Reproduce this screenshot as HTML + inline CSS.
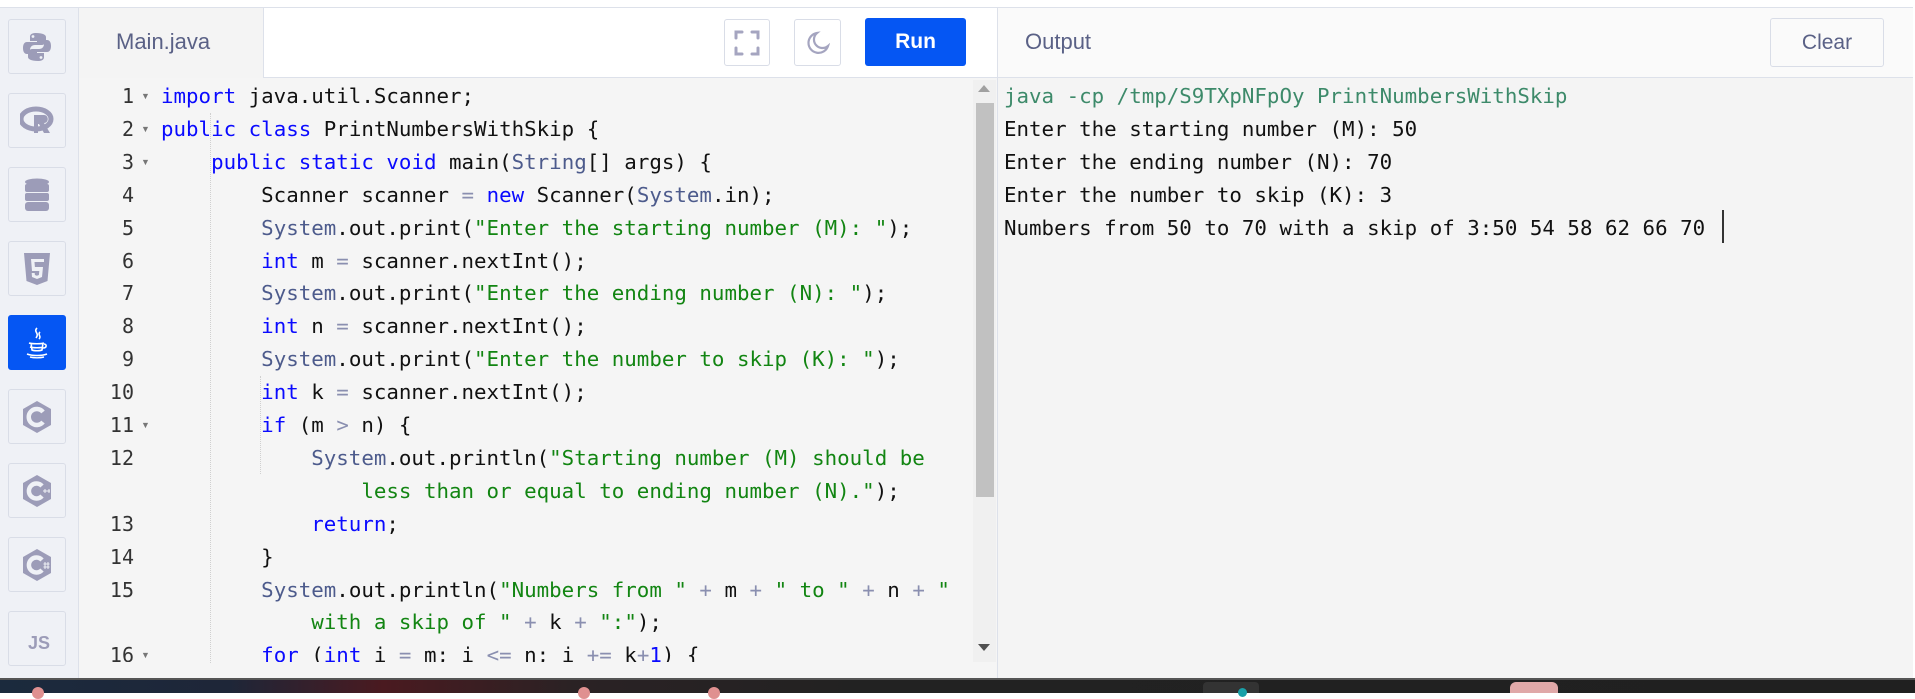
<!DOCTYPE html>
<html><head><meta charset="utf-8">
<style>
*{margin:0;padding:0;box-sizing:border-box}
html,body{width:1915px;height:693px;overflow:hidden;background:#fff;font-family:"Liberation Sans",sans-serif}
.abs{position:absolute}
#side{left:0;top:7px;width:79px;height:672px;background:#eff1f6;border-right:1px solid #dde1ea;border-top:1px solid #dde1ea}
.ib{position:absolute;left:8px;width:58px;height:55px;border:1px solid #d9dde7;border-radius:3px;display:flex;align-items:center;justify-content:center}
.ib.act{background:#0556f3;border-color:#0556f3}
#tab{left:79px;top:7px;width:184px;height:71px;background:#f4f4f4;border-top:1px solid #dde1ea}
#tab span{position:absolute;left:37px;top:21px;font-size:22px;color:#5a6186}
#hdr{left:263px;top:7px;width:734px;height:71px;background:#fff;border-left:1px solid #dde1ea;border-bottom:1px solid #dde1ea;border-top:1px solid #dde1ea}
.btn{position:absolute;top:19px;height:47px;border:1px solid #d9dde7;border-radius:3px;background:#fff;display:flex;align-items:center;justify-content:center}
#run{left:865px;top:18px;width:101px;height:48px;background:#0556f3;border-radius:3px;color:#fff;font-weight:bold;font-size:21px;display:flex;align-items:center;justify-content:center}
#ed{left:79px;top:78px;width:918px;height:601px;background:#f5f5f5}
#code{left:79px;top:80px;width:894px;height:582px;overflow:hidden}
.ln{position:absolute;height:32.9px;line-height:32.9px;font-family:"DejaVu Sans Mono",monospace;font-size:20.8px;white-space:pre;color:#111}
.num{position:absolute;left:0;width:55px;text-align:right;height:32.9px;line-height:32.9px;font-family:"DejaVu Sans Mono",monospace;font-size:20px;color:#333}
.fold{position:absolute;left:62px;font-size:9px;color:#777;line-height:32.9px}
.k{color:#0a0aff}.s{color:#128512}.c{color:#4d5b8c}.o{color:#8a8fb0}
.guide{position:absolute;width:0;border-left:1px dotted #d0d0d0}
#sb{left:973px;top:80px;width:23px;height:582px;background:#f0f0f0}
#thumb{left:976px;top:103px;width:18px;height:394px;background:#c1c1c1}
#ohdr{left:997px;top:7px;width:916px;height:71px;background:#fafafa;border-left:1px solid #dde1ea;border-bottom:1px solid #dde1ea;border-top:1px solid #dde1ea}
#ohdr span{position:absolute;left:27px;top:21px;font-size:22px;color:#5a6186}
#clear{position:absolute;left:772px;top:10px;width:114px;height:49px;border:1px solid #d9dde7;border-radius:3px;background:#fafafa;font-size:21px;color:#5a6186;display:flex;align-items:center;justify-content:center}
#out{left:997px;top:78px;width:916px;height:601px;background:#f4f4f4;border-left:1px solid #dde1ea}
.ol{position:absolute;left:6px;height:32.9px;line-height:32.9px;font-family:"DejaVu Sans Mono",monospace;font-size:20.8px;white-space:pre;color:#111}
#task{left:0;top:678px;width:1915px;height:15px;background:linear-gradient(90deg,#1b2a3d 0%,#1e2638 12%,#4a1a20 20%,#2a2224 30%,#222 45%,#202020 100%);border-top:2px solid #555}
.dot{position:absolute;top:687px;width:12px;height:12px;border-radius:50%;background:#e09090}
</style></head><body>
<div class="abs" style="left:0;top:0;width:1915px;height:7px;background:#fff"></div>
<div id="side" class="abs"></div>
<div class="ib" style="top:19px"><svg width="30" height="32" viewBox="0 0 30 32"><path d="M14 2c-6 0-6 3-6 4v4h7v1H5c-3 0-4 3-4 6s1 6 4 6h3v-4c0-3 2-5 5-5h7c2 0 4-2 4-4V6c0-2-3-4-10-4z" fill="#9c9cb8"/><path d="M16 30c6 0 6-3 6-4v-4h-7v-1h10c3 0 4-3 4-6s-1-6-4-6h-3v4c0 3-2 5-5 5h-7c-2 0-4 2-4 4v4c0 2 3 4 10 4z" fill="#9c9cb8"/><circle cx="11" cy="5.5" r="1.4" fill="#eff1f6"/><circle cx="19" cy="26.5" r="1.4" fill="#eff1f6"/></svg></div>
<div class="ib" style="top:93px"><svg width="34" height="30" viewBox="0 0 34 30"><ellipse cx="16" cy="13" rx="15" ry="10" fill="none" stroke="#9c9cb8" stroke-width="5"/><path d="M14 9h10c5 0 5 8 0 8l6 10h-6l-5-9h-1v9h-4z" fill="#9c9cb8"/></svg></div>
<div class="ib" style="top:167px"><svg width="26" height="34" viewBox="0 0 26 34"><ellipse cx="13" cy="4" rx="12" ry="3.5" fill="#9c9cb8"/><rect x="1" y="6" width="24" height="8" rx="2" fill="#9c9cb8"/><rect x="1" y="15" width="24" height="8" rx="2" fill="#9c9cb8"/><rect x="1" y="24" width="24" height="9" rx="3" fill="#9c9cb8"/></svg></div>
<div class="ib" style="top:241px"><svg width="28" height="34" viewBox="0 0 28 34"><path d="M1 1h26l-2.5 28L14 33 3.5 29z" fill="#9c9cb8"/><path d="M8 7h13v3h-9.5l.4 5H20l-1 10-5 2-5-2-.3-4h3l.2 2 2 .8 2-.8.4-4H9z" fill="#eff1f6"/></svg></div>
<div class="ib act" style="top:315px"><svg width="26" height="34" viewBox="0 0 26 34" fill="none" stroke="#fff" stroke-width="1.6"><path d="M13 2c-4 4 3 5-1 10M16 6c-3 3 2 4-1 7"/><path d="M5 17c3 1 13 1 15 0M6 21c3 1 11 1 13 0M7 17l1 7c2 1 8 1 10 0l1-7M20 18c3 0 3 4-1 4"/><path d="M3 28c5 2 15 2 20 0M6 31c4 1 10 1 14 0"/></svg></div>
<div class="ib" style="top:389px"><svg width="30" height="34" viewBox="0 0 30 34"><path d="M15 1l14 8v16l-14 8-14-8V9z" fill="#9c9cb8"/><path d="M21 12a8 8 0 1 0 0 10" fill="none" stroke="#eff1f6" stroke-width="4.5"/></svg></div>
<div class="ib" style="top:463px"><svg width="30" height="34" viewBox="0 0 30 34"><path d="M15 1l14 8v16l-14 8-14-8V9z" fill="#9c9cb8"/><path d="M20 12a7.5 7.5 0 1 0 0 10" fill="none" stroke="#eff1f6" stroke-width="4.5"/><path d="M21 17h4M23 15v4M25 17h3M27 15v4" stroke="#eff1f6" stroke-width="1"/></svg></div>
<div class="ib" style="top:537px"><svg width="30" height="34" viewBox="0 0 30 34"><path d="M15 1l14 8v16l-14 8-14-8V9z" fill="#9c9cb8"/><path d="M20 12a7.5 7.5 0 1 0 0 10" fill="none" stroke="#eff1f6" stroke-width="4.5"/><path d="M23 14v7M26 14v7M21.5 16h6M21.5 19h6" stroke="#eff1f6" stroke-width="1"/></svg></div>
<div class="ib" style="top:611px"><span style="font-weight:bold;font-size:18px;color:#9c9cb8;margin-top:10px;margin-left:4px">JS</span></div>

<div id="tab" class="abs"><span>Main.java</span></div>
<div id="hdr" class="abs"></div>
<div class="btn" style="left:724px;width:46px"><svg width="26" height="26" viewBox="0 0 26 26" fill="none" stroke="#a5a5c0" stroke-width="3" stroke-linecap="round"><path d="M2 8V2h6M18 2h6v6M24 18v6h-6M8 24H2v-6"/></svg></div>
<div class="btn" style="left:794px;width:47px"><svg width="24" height="24" viewBox="0 0 24 24" fill="none" stroke="#a5a5c0" stroke-width="2.2"><path d="M11 2a10 10 0 1 0 11 13A8 8 0 0 1 11 2z"/></svg></div>
<div id="run" class="abs">Run</div>

<div id="ed" class="abs"></div>
<div class="guide" style="left:210px;top:113px;height:550px"></div>
<div class="guide" style="left:260px;top:376px;height:98px"></div>
<div id="code" class="abs">
<div class="num" style="top:0">1</div><div class="fold" style="top:0">▼</div>
<div class="num" style="top:32.9px">2</div><div class="fold" style="top:32.9px">▼</div>
<div class="num" style="top:65.8px">3</div><div class="fold" style="top:65.8px">▼</div>
<div class="num" style="top:98.7px">4</div>
<div class="num" style="top:131.6px">5</div>
<div class="num" style="top:164.5px">6</div>
<div class="num" style="top:197.4px">7</div>
<div class="num" style="top:230.3px">8</div>
<div class="num" style="top:263.2px">9</div>
<div class="num" style="top:296.1px">10</div>
<div class="num" style="top:329px">11</div><div class="fold" style="top:329px">▼</div>
<div class="num" style="top:361.9px">12</div>
<div class="num" style="top:427.7px">13</div>
<div class="num" style="top:460.6px">14</div>
<div class="num" style="top:493.5px">15</div>
<div class="num" style="top:559.3px">16</div><div class="fold" style="top:559.3px">▼</div>

<div class="ln" style="left:82px;top:0"><span class="k">import</span> java.util.Scanner;</div>
<div class="ln" style="left:82px;top:32.9px"><span class="k">public</span> <span class="k">class</span> PrintNumbersWithSkip {</div>
<div class="ln" style="left:82px;top:65.8px">    <span class="k">public</span> <span class="k">static</span> <span class="k">void</span> main(<span class="c">String</span>[] args) {</div>
<div class="ln" style="left:82px;top:98.7px">        Scanner scanner <span class="o">=</span> <span class="k">new</span> Scanner(<span class="c">System</span>.in);</div>
<div class="ln" style="left:82px;top:131.6px">        <span class="c">System</span>.out.print(<span class="s">"Enter the starting number (M): "</span>);</div>
<div class="ln" style="left:82px;top:164.5px">        <span class="k">int</span> m <span class="o">=</span> scanner.nextInt();</div>
<div class="ln" style="left:82px;top:197.4px">        <span class="c">System</span>.out.print(<span class="s">"Enter the ending number (N): "</span>);</div>
<div class="ln" style="left:82px;top:230.3px">        <span class="k">int</span> n <span class="o">=</span> scanner.nextInt();</div>
<div class="ln" style="left:82px;top:263.2px">        <span class="c">System</span>.out.print(<span class="s">"Enter the number to skip (K): "</span>);</div>
<div class="ln" style="left:82px;top:296.1px">        <span class="k">int</span> k <span class="o">=</span> scanner.nextInt();</div>
<div class="ln" style="left:82px;top:329px">        <span class="k">if</span> (m <span class="o">&gt;</span> n) {</div>
<div class="ln" style="left:82px;top:361.9px">            <span class="c">System</span>.out.println(<span class="s">"Starting number (M) should be</span></div>
<div class="ln" style="left:82px;top:394.8px">                <span class="s">less than or equal to ending number (N)."</span>);</div>
<div class="ln" style="left:82px;top:427.7px">            <span class="k">return</span>;</div>
<div class="ln" style="left:82px;top:460.6px">        }</div>
<div class="ln" style="left:82px;top:493.5px">        <span class="c">System</span>.out.println(<span class="s">"Numbers from "</span> <span class="o">+</span> m <span class="o">+</span> <span class="s">" to "</span> <span class="o">+</span> n <span class="o">+</span> <span class="s">"</span></div>
<div class="ln" style="left:82px;top:526.4px">            <span class="s">with a skip of "</span> <span class="o">+</span> k <span class="o">+</span> <span class="s">":"</span>);</div>
<div class="ln" style="left:82px;top:559.3px">        <span class="k">for</span> (<span class="k">int</span> i <span class="o">=</span> m; i <span class="o">&lt;=</span> n; i <span class="o">+=</span> k<span class="o">+</span><span class="k">1</span>) {</div>
</div>
<div id="sb" class="abs"></div>
<div id="thumb" class="abs"></div>
<div class="abs" style="left:978px;top:85px;width:0;height:0;border-left:6px solid transparent;border-right:6px solid transparent;border-bottom:7px solid #a0a0a0"></div>
<div class="abs" style="left:978px;top:644px;width:0;height:0;border-left:6px solid transparent;border-right:6px solid transparent;border-top:7px solid #505050"></div>

<div id="ohdr" class="abs"><span>Output</span><div id="clear">Clear</div></div>
<div id="out" class="abs">
<div class="ol" style="top:2px;color:#3d8a6a">java -cp /tmp/S9TXpNFpOy PrintNumbersWithSkip</div>
<div class="ol" style="top:34.9px">Enter the starting number (M): 50</div>
<div class="ol" style="top:67.8px">Enter the ending number (N): 70</div>
<div class="ol" style="top:100.7px">Enter the number to skip (K): 3</div>
<div class="ol" style="top:133.6px">Numbers from 50 to 70 with a skip of 3:50 54 58 62 66 70 </div>
<div class="abs" style="left:724px;top:132px;width:2px;height:33px;background:#333"></div>
</div>
<div id="task" class="abs"></div>
<div class="dot" style="left:32px"></div>
<div class="dot" style="left:578px"></div>
<div class="dot" style="left:708px"></div>
<div class="abs" style="left:1203px;top:682px;width:56px;height:11px;background:#333;border-radius:4px 4px 0 0"></div>
<div class="abs" style="left:1238px;top:688px;width:9px;height:9px;border-radius:50%;background:#1aa0a8"></div>
<div class="abs" style="left:1510px;top:682px;width:48px;height:11px;background:#e0a8a8;border-radius:6px 6px 0 0"></div>
</body></html>
